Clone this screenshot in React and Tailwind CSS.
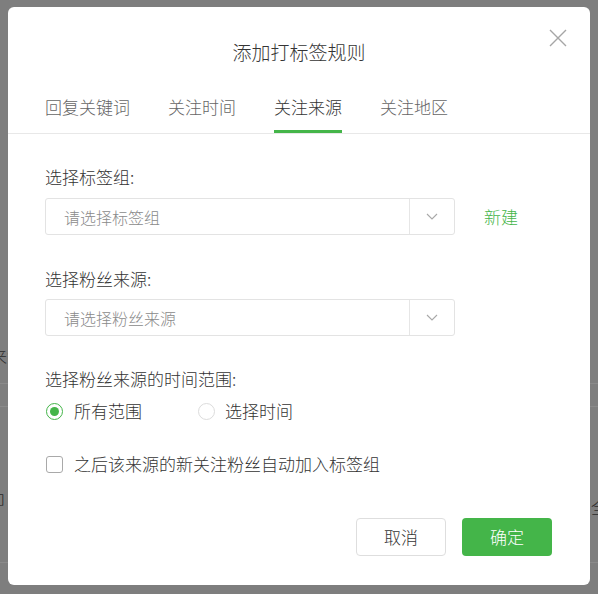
import React, { useState } from 'react';

const tabs = ['回复关键词', '关注时间', '关注来源', '关注地区'];

const Chevron = () => (
  <svg width="12" height="7" viewBox="0 0 12 7" fill="none" stroke="#a8a8a8" strokeWidth="1.1">
    <path d="M1 1l5 5 5-5" />
  </svg>
);

const SelectBox = ({ placeholder }) => (
  <div className="flex w-[410px] h-[37px] border border-[#e3e3e3] rounded-[3px] bg-white">
    <div className="flex-1 flex items-center pl-[18px] text-[16px] text-[#8a8a8a]">
      {placeholder}
    </div>
    <div className="w-[45px] flex items-center justify-center border-l border-[#e6e6e6]">
      <Chevron />
    </div>
  </div>
);

const App = () => {
  const [active, setActive] = useState(2);
  const [range, setRange] = useState('all');
  const [autoJoin, setAutoJoin] = useState(false);

  return (
    <div className="relative w-[598px] h-[594px] overflow-hidden bg-[#7e7e7e] font-['Noto_Sans_CJK_SC',sans-serif] font-light">
      {/* page under the overlay */}
      <div className="flex flex-col text-[17px] text-[#2a2a2a]">
        <div className="h-[345px]" />
        <div className="h-[39px] border-b border-[#8a8a8a] ml-[-10px] leading-[22px]">来源</div>
        <div className="h-[23px] border-b border-[#8a8a8a]" />
        <div className="h-[106px] flex justify-between items-end">
          <span className="ml-[-9px] leading-[24px]">卩</span>
          <span className="mr-[-10px] leading-[24px] mb-[-6px]">全</span>
        </div>
        <div className="h-[50px] border-b border-[#8a8a8a]" />
      </div>

      {/* dialog */}
      <div className="absolute inset-0 flex justify-center pt-[7px]">
        <div className="relative w-[582px] h-[578px] bg-white rounded-[6px] flex flex-col text-[#333]">
          <button className="absolute right-[23px] top-[22px] w-[18px] h-[18px]">
            <svg width="18" height="18" viewBox="0 0 18 18" stroke="#a6a6a6" strokeWidth="1.4">
              <path d="M1 1l16 16M17 1L1 17" />
            </svg>
          </button>

          <div className="pt-[33px] text-center text-[19px] leading-[24px] text-[#353535]">
            添加打标签规则
          </div>

          <div className="mt-[31px] flex gap-[38px] px-[37px] border-b border-[#e8e8e8]">
            {tabs.map((t, i) => (
              <div
                key={t}
                onClick={() => setActive(i)}
                className={`cursor-pointer text-[17px] leading-[24px] pb-[11px] border-b-[3px] ${
                  active === i ? 'border-[#44b549] text-[#333]' : 'border-transparent text-[#666]'
                }`}
              >
                {t}
              </div>
            ))}
          </div>

          <div className="px-[37px] pt-[31px] flex flex-col text-[17px] leading-[24px]">
            <div>选择标签组:</div>
            <div className="mt-[9px] flex items-center">
              <SelectBox placeholder="请选择标签组" />
              <span className="ml-[29px] text-[#44b549]">新建</span>
            </div>

            <div className="mt-[32px]">选择粉丝来源:</div>
            <div className="mt-[8px]">
              <SelectBox placeholder="请选择粉丝来源" />
            </div>

            <div className="mt-[31px]">选择粉丝来源的时间范围:</div>
            <div className="mt-[8px] flex items-center">
              <label className="w-[153px] flex items-center cursor-pointer" onClick={() => setRange('all')}>
                <span
                  className={`ml-[1px] w-[17px] h-[17px] rounded-full border flex items-center justify-center ${
                    range === 'all' ? 'border-[#44b549]' : 'border-[#dcdcdc]'
                  }`}
                >
                  {range === 'all' && <span className="w-[9px] h-[9px] rounded-full bg-[#44b549]" />}
                </span>
                <span className="ml-[11px]">所有范围</span>
              </label>
              <label className="flex items-center cursor-pointer" onClick={() => setRange('custom')}>
                <span
                  className={`w-[17px] h-[17px] rounded-full border flex items-center justify-center ${
                    range === 'custom' ? 'border-[#44b549]' : 'border-[#dcdcdc]'
                  }`}
                >
                  {range === 'custom' && <span className="w-[9px] h-[9px] rounded-full bg-[#44b549]" />}
                </span>
                <span className="ml-[10px]">选择时间</span>
              </label>
            </div>

            <label className="mt-[29px] flex items-center cursor-pointer" onClick={() => setAutoJoin(!autoJoin)}>
              <span
                className={`ml-[1px] w-[17px] h-[17px] rounded-[3px] border ${
                  autoJoin ? 'border-[#44b549] bg-[#44b549]' : 'border-[#a9a9a9]'
                }`}
              />
              <span className="ml-[11px]">之后该来源的新关注粉丝自动加入标签组</span>
            </label>
          </div>

          <div className="mt-[42px] pr-[38px] flex justify-end gap-[16px]">
            <button className="w-[90px] h-[38px] rounded-[4px] border border-[#dedede] bg-white text-[17px] text-[#353535]">
              取消
            </button>
            <button className="w-[90px] h-[38px] rounded-[4px] bg-[#44b549] text-[17px] text-white">
              确定
            </button>
          </div>
        </div>
      </div>
    </div>
  );
};

export default App;
